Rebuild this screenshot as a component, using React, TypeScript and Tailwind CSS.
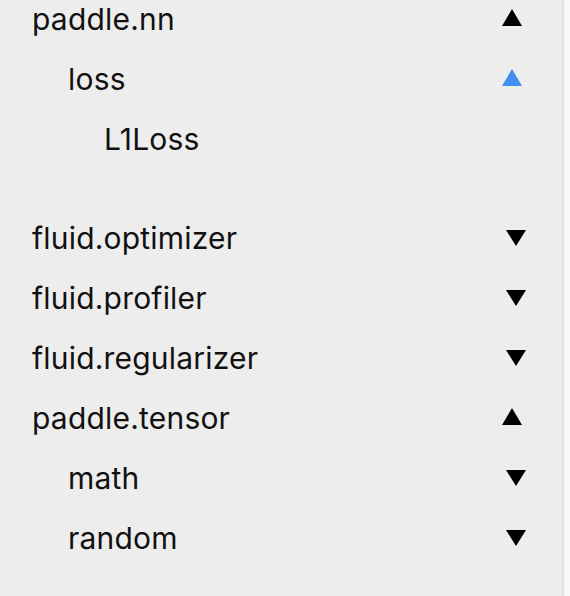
import React from "react";

type Node = {
  label: string;
  depth: number;
  state: "open" | "closed" | "active" | "leaf";
  gapAfter?: boolean;
};

const rows: Node[] = [
  { label: "paddle.nn", depth: 0, state: "open" },
  { label: "loss", depth: 1, state: "active" },
  { label: "L1Loss", depth: 2, state: "leaf", gapAfter: true },
  { label: "fluid.optimizer", depth: 0, state: "closed" },
  { label: "fluid.profiler", depth: 0, state: "closed" },
  { label: "fluid.regularizer", depth: 0, state: "closed" },
  { label: "paddle.tensor", depth: 0, state: "open" },
  { label: "math", depth: 1, state: "closed" },
  { label: "random", depth: 1, state: "closed" },
];

const indent = ["pl-[32px]", "pl-[68px]", "pl-[104px]"];

function Caret({ state }: { state: Node["state"] }) {
  if (state === "leaf") return null;
  if (state === "closed") {
    return (
      <svg width="24" height="20" viewBox="0 0 24 20" className="shrink-0">
        <polygon points="4,2 24,2 14,18" fill="#000" />
      </svg>
    );
  }
  return (
    <svg width="24" height="20" viewBox="0 0 24 20" className="shrink-0">
      <polygon
        points="10,0 20,17 0,17"
        fill={state === "active" ? "#3f8ef0" : "#000"}
      />
    </svg>
  );
}

export default function App() {
  return (
    <div className="flex h-[596px] w-[570px] overflow-hidden bg-[#ededed]">
      <div className="flex-1">
        <div className="-mt-[11px] flex flex-col">
          {rows.map((r) => (
            <div key={r.label} className={r.gapAfter ? "pb-[39px]" : ""}>
              <div
                className={`flex h-[60px] items-center justify-between pr-[36px] text-[30px] tracking-[0.2px] text-[#111] ${indent[r.depth]}`}
                style={{ fontFamily: "Inter, sans-serif" }}
              >
                <span>{r.label}</span>
                <Caret state={r.state} />
              </div>
            </div>
          ))}
        </div>
      </div>
      <div className="w-[2px] bg-[#e3e3e3]" />
      <div className="w-[6px] bg-[#f8f8f8]" />
    </div>
  );
}
